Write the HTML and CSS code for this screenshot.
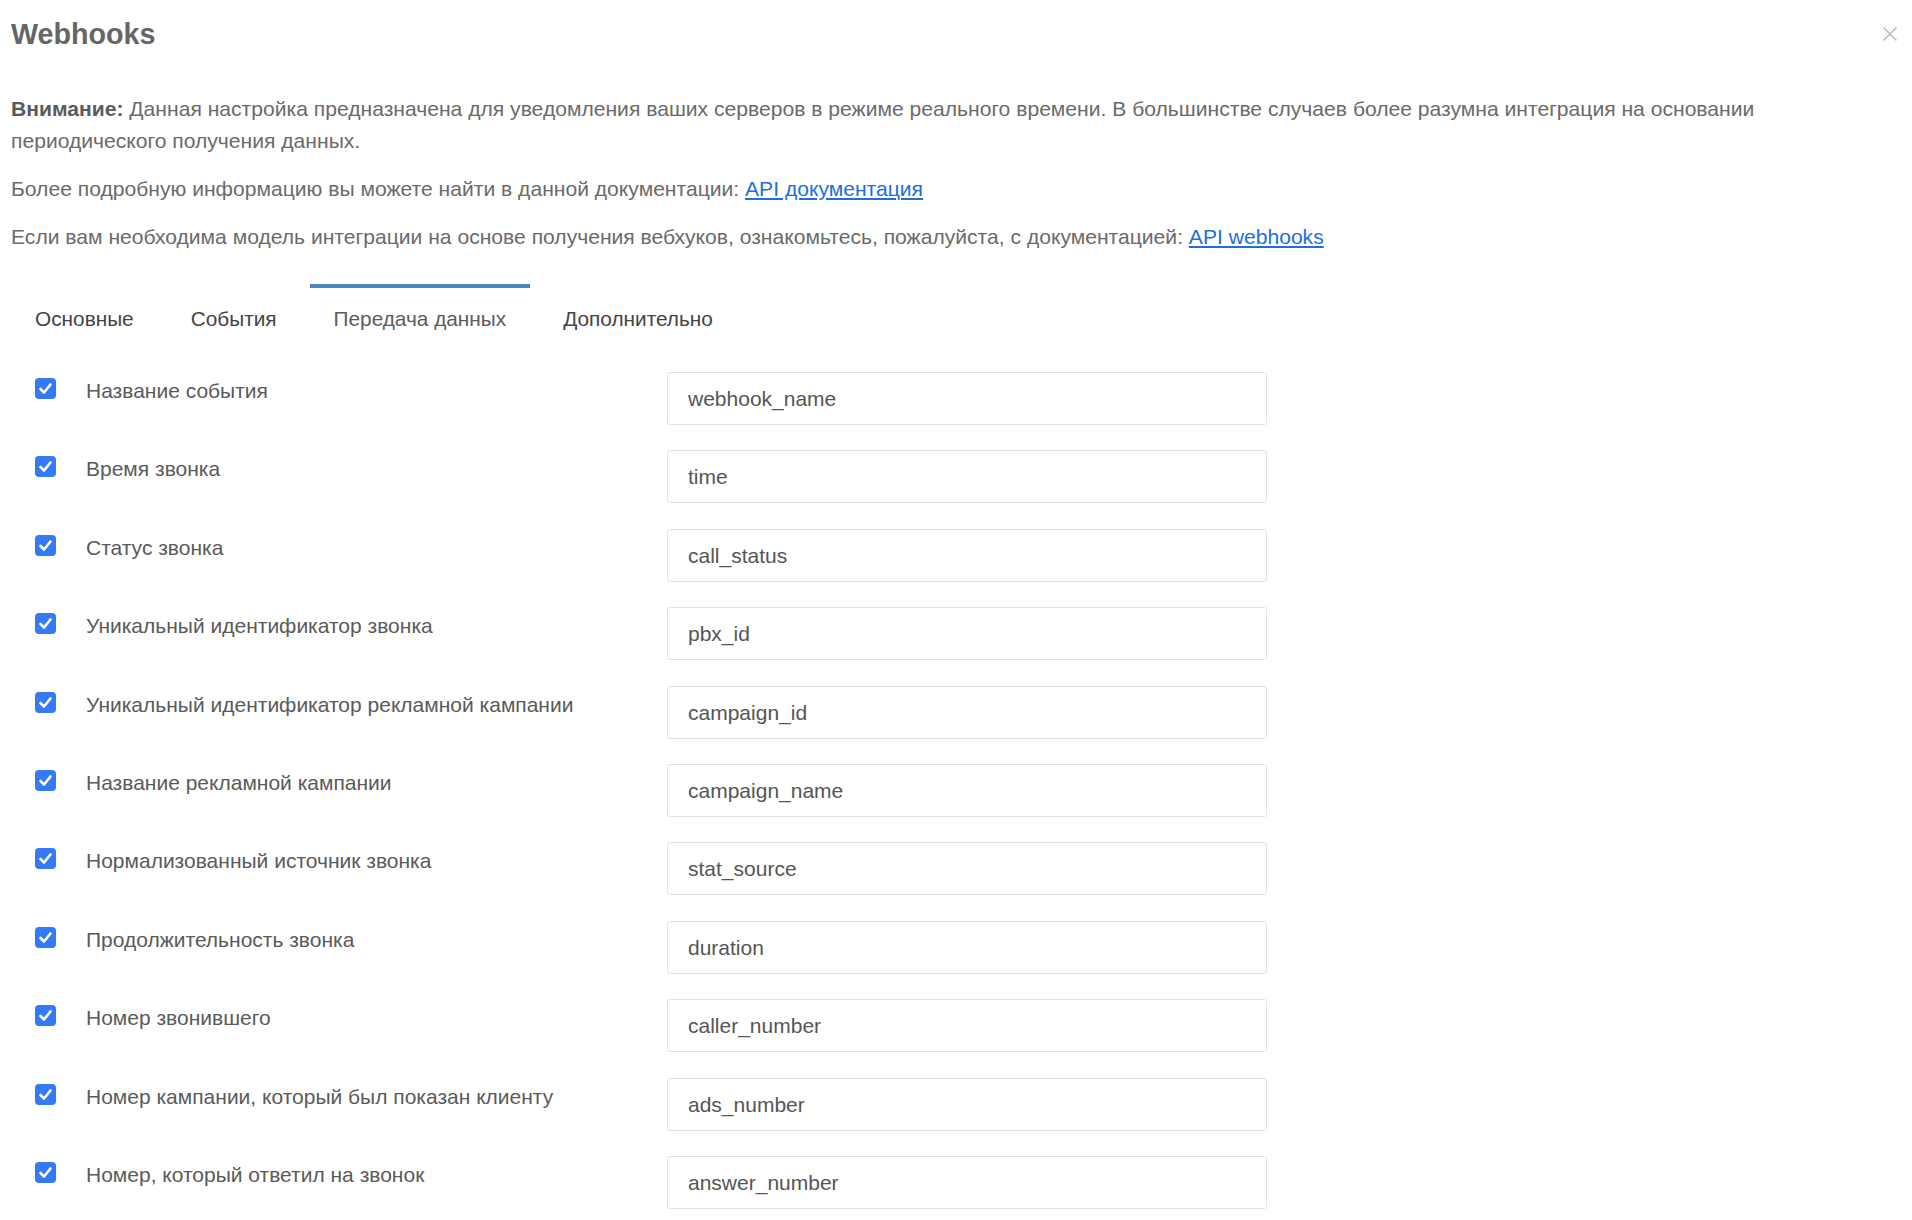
FILE: index.html
```html
<!DOCTYPE html>
<html lang="ru">
<head>
<meta charset="utf-8">
<title>Webhooks</title>
<link rel="stylesheet" href="styles.css">
</head>
<body>
<div class="modal">
  <div class="modal-header">
    <h1 class="title">Webhooks</h1>
    <button class="close" type="button" aria-label="Закрыть">
      <svg width="16" height="16" viewBox="0 0 16 16"><path d="M1.5 1.5 L14.5 14.5 M14.5 1.5 L1.5 14.5" stroke="#bdbdbd" stroke-width="1.6" fill="none"/></svg>
    </button>
  </div>
  <div class="notes">
    <p class="note"><b>Внимание:</b> Данная настройка предназначена для уведомления ваших серверов в режиме реального времени. В большинстве случаев более разумна интеграция на основании периодического получения данных.</p>
    <p class="note">Более подробную информацию вы можете найти в данной документации: <a href="#" class="link">API документация</a></p>
    <p class="note">Если вам необходима модель интеграции на основе получения вебхуков, ознакомьтесь, пожалуйста, с документацией: <a href="#" class="link">API webhooks</a></p>
  </div>
  <div class="tabs">
    <div class="tab">Основные</div>
    <div class="tab">События</div>
    <div class="tab active">Передача данных</div>
    <div class="tab">Дополнительно</div>
  </div>
  <div class="fields">
    <div class="row"><span class="check"><svg viewBox="0 0 21 21"><path d="M5.5 11 L9 14.5 L15.5 6.5" stroke="#fff" stroke-width="2.6" fill="none" stroke-linecap="round" stroke-linejoin="round"/></svg></span><span class="label">Название события</span><div class="input">webhook_name</div></div>
    <div class="row"><span class="check"><svg viewBox="0 0 21 21"><path d="M5.5 11 L9 14.5 L15.5 6.5" stroke="#fff" stroke-width="2.6" fill="none" stroke-linecap="round" stroke-linejoin="round"/></svg></span><span class="label">Время звонка</span><div class="input">time</div></div>
    <div class="row"><span class="check"><svg viewBox="0 0 21 21"><path d="M5.5 11 L9 14.5 L15.5 6.5" stroke="#fff" stroke-width="2.6" fill="none" stroke-linecap="round" stroke-linejoin="round"/></svg></span><span class="label">Статус звонка</span><div class="input">call_status</div></div>
    <div class="row"><span class="check"><svg viewBox="0 0 21 21"><path d="M5.5 11 L9 14.5 L15.5 6.5" stroke="#fff" stroke-width="2.6" fill="none" stroke-linecap="round" stroke-linejoin="round"/></svg></span><span class="label">Уникальный идентификатор звонка</span><div class="input">pbx_id</div></div>
    <div class="row"><span class="check"><svg viewBox="0 0 21 21"><path d="M5.5 11 L9 14.5 L15.5 6.5" stroke="#fff" stroke-width="2.6" fill="none" stroke-linecap="round" stroke-linejoin="round"/></svg></span><span class="label">Уникальный идентификатор рекламной кампании</span><div class="input">campaign_id</div></div>
    <div class="row"><span class="check"><svg viewBox="0 0 21 21"><path d="M5.5 11 L9 14.5 L15.5 6.5" stroke="#fff" stroke-width="2.6" fill="none" stroke-linecap="round" stroke-linejoin="round"/></svg></span><span class="label">Название рекламной кампании</span><div class="input">campaign_name</div></div>
    <div class="row"><span class="check"><svg viewBox="0 0 21 21"><path d="M5.5 11 L9 14.5 L15.5 6.5" stroke="#fff" stroke-width="2.6" fill="none" stroke-linecap="round" stroke-linejoin="round"/></svg></span><span class="label">Нормализованный источник звонка</span><div class="input">stat_source</div></div>
    <div class="row"><span class="check"><svg viewBox="0 0 21 21"><path d="M5.5 11 L9 14.5 L15.5 6.5" stroke="#fff" stroke-width="2.6" fill="none" stroke-linecap="round" stroke-linejoin="round"/></svg></span><span class="label">Продолжительность звонка</span><div class="input">duration</div></div>
    <div class="row"><span class="check"><svg viewBox="0 0 21 21"><path d="M5.5 11 L9 14.5 L15.5 6.5" stroke="#fff" stroke-width="2.6" fill="none" stroke-linecap="round" stroke-linejoin="round"/></svg></span><span class="label">Номер звонившего</span><div class="input">caller_number</div></div>
    <div class="row"><span class="check"><svg viewBox="0 0 21 21"><path d="M5.5 11 L9 14.5 L15.5 6.5" stroke="#fff" stroke-width="2.6" fill="none" stroke-linecap="round" stroke-linejoin="round"/></svg></span><span class="label">Номер кампании, который был показан клиенту</span><div class="input">ads_number</div></div>
    <div class="row"><span class="check"><svg viewBox="0 0 21 21"><path d="M5.5 11 L9 14.5 L15.5 6.5" stroke="#fff" stroke-width="2.6" fill="none" stroke-linecap="round" stroke-linejoin="round"/></svg></span><span class="label">Номер, который ответил на звонок</span><div class="input">answer_number</div></div>
  </div>
</div>
</body>
</html>
```

FILE: styles.css
```css
* { box-sizing: border-box; }
html, body { margin: 0; padding: 0; background: #fff; }
body {
  font-family: "Liberation Sans", Arial, Helvetica, sans-serif;
  color: #666;
  overflow: hidden;
}
.modal {
  padding: 16px 14px 0 11px;
}
.modal-header {
  display: flex;
  justify-content: space-between;
  align-items: center;
}
.title {
  margin: 0;
  font-size: 28.7px;
  line-height: 36px;
  font-weight: bold;
  color: #666;
}
.close {
  border: 0;
  background: none;
  padding: 0;
  margin-right: 0;
  width: 16px;
  height: 16px;
  display: flex;
}
.close svg { width: 16px; height: 16px; display: block; }
.notes {
  margin-top: 41px;
}
.note {
  margin: 0 0 16px 0;
  font-size: 21.1px;
  line-height: 32px;
  color: #6a6a6a;
}
.note b { color: #5a5a5a; }
.link {
  color: #1e6fd9;
  text-decoration: underline;
}
.tabs {
  display: flex;
  gap: 9px;
  margin-top: 31px;
}
.tab {
  padding: 16px 24px 16px 24px;
  border-top: 4px solid transparent;
  font-size: 20.8px;
  line-height: 30px;
  color: #444;
}
.tab.active {
  border-top-color: #4a86bf;
  color: #5c5c5c;
}
.fields {
  margin-top: 22px;
  padding-left: 24px;
}
.row {
  display: flex;
  align-items: flex-start;
  margin-bottom: 25.4px;
}
.check {
  width: 21px;
  height: 21px;
  margin-top: 6px;
  border-radius: 4px;
  background: #3479f5;
  display: flex;
  flex-shrink: 0;
}
.check svg { width: 21px; height: 21px; display: block; }
.label {
  margin-left: 30px;
  margin-top: 3px;
  width: 581px;
  flex-shrink: 0;
  font-size: 21px;
  line-height: 32px;
  color: #5a5a5a;
}
.input {
  width: 600px;
  height: 53px;
  border: 1px solid #e2e2e2;
  border-radius: 3px;
  padding: 0 20px;
  font-size: 21px;
  line-height: 51px;
  color: #555;
}
```
